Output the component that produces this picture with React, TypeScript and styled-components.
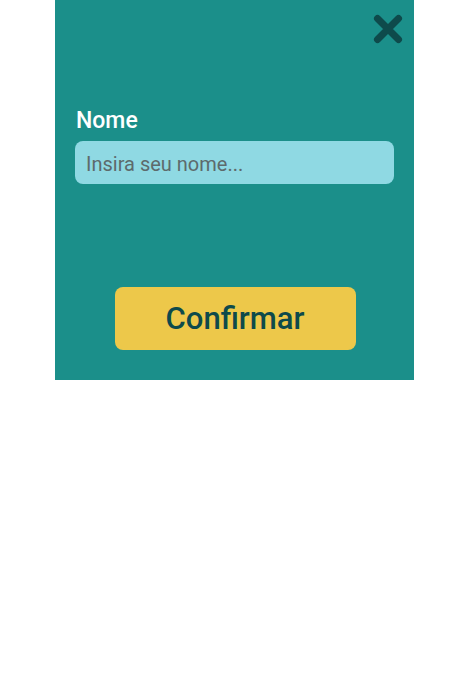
import React from "react";
import styled, { createGlobalStyle } from "styled-components";

const Global = createGlobalStyle`
  html, body { margin: 0; padding: 0; background: #ffffff; }
  body { font-family: Roboto, "Noto Sans", "Liberation Sans", sans-serif; }
  * { box-sizing: border-box; }
`;

const Panel = styled.div`
  width: 359px;
  height: 380px;
  margin: 0 0 0 55px;
  background: #1b8f8a;
  padding: 0 20px 30px;
  display: flex;
  flex-direction: column;
`;

const Header = styled.div`
  display: flex;
  justify-content: flex-end;
  padding-top: 14px;
  margin-right: -9px;
`;

const CloseButton = styled.button`
  width: 30px;
  height: 30px;
  padding: 0;
  border: none;
  background: transparent;
  display: flex;
  cursor: pointer;
`;

const Field = styled.div`
  display: flex;
  flex-direction: column;
  gap: 7px;
  margin-top: 64px;
`;

const Label = styled.label`
  font-family: Roboto, sans-serif;
  font-size: 23px;
  line-height: 26px;
  font-weight: 500;
  color: #ffffff;
  padding-left: 1px;
`;

const Input = styled.input`
  height: 43px;
  width: 100%;
  border: none;
  border-radius: 8px;
  background: #8fd9e3;
  padding: 3px 10px 0 11px;
  font-family: Roboto, sans-serif;
  font-size: 20px;
  color: #333;
  outline: none;
  &::placeholder { color: #5d6a6c; opacity: 1; }
`;

const ConfirmButton = styled.button`
  align-self: center;
  margin-top: 103px;
  width: 241px;
  height: 63px;
  border: none;
  border-radius: 8px;
  background: #edc84a;
  color: #0e4a4b;
  font-family: Roboto, sans-serif;
  font-size: 31px;
  font-weight: 500;
  padding: 0;
  margin-left: 1px;
  cursor: pointer;
`;

export default function App() {
  return (
    <>
      <Global />
      <Panel>
        <Header>
          <CloseButton aria-label="Fechar">
            <svg width="30" height="30" viewBox="0 0 30 30">
              <path d="M4.5 4.5 L25.5 25.5 M25.5 4.5 L4.5 25.5" stroke="#0e4a4b" strokeWidth="7" strokeLinecap="round" />
            </svg>
          </CloseButton>
        </Header>
        <Field>
          <Label htmlFor="nome">Nome</Label>
          <Input id="nome" placeholder="Insira seu nome..." />
        </Field>
        <ConfirmButton>Confirmar</ConfirmButton>
      </Panel>
    </>
  );
}
